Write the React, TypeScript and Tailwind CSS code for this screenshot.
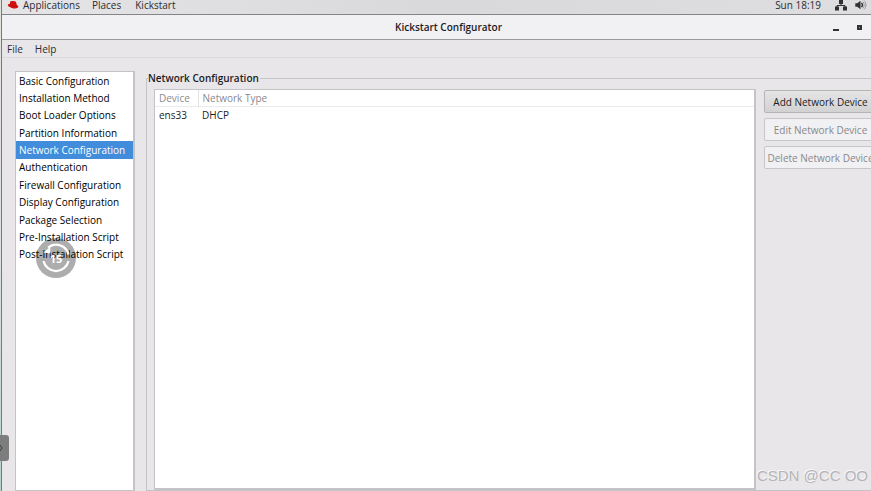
import { useState } from "react";

const sections = [
  "Basic Configuration",
  "Installation Method",
  "Boot Loader Options",
  "Partition Information",
  "Network Configuration",
  "Authentication",
  "Firewall Configuration",
  "Display Configuration",
  "Package Selection",
  "Pre-Installation Script",
  "Post-Installation Script",
];

function RedHat() {
  return (
    <svg className="h-3 w-3" viewBox="0 0 12 12" aria-hidden="true">
      <path d="M3.300 2.600C4 1.500 5.400 2 6.200 2.200 7.600 1.800 9 2.500 9.300 4l.5 2c1.200.4 1.800 1.300 1.500 2.100C10.700 9.700 7.500 9.800 4.800 8.900 2.500 8.200.5 6.900.8 5.700c.2-.7 1-.9 1.900-.8z" fill="#d40f0f" />
      <path d="M2.700 5.500c1 1.500 4.800 2.600 7 1.500" stroke="#a81010" strokeWidth=".6" fill="none" />
    </svg>
  );
}

function NetworkIcon() {
  return (
    <svg className="h-3 w-3" viewBox="0 0 12 12" fill="#2e3033" aria-hidden="true">
      <path d="M4 1h4v4H4zM0 7.500h4v4H0zM8 7.500h4v4H8z" />
      <path d="M6 4v2.500M2 8.500v-2h8v2" stroke="#2e3033" strokeWidth="1" fill="none" />
    </svg>
  );
}

function VolumeIcon() {
  return (
    <svg className="h-3 w-3" viewBox="0 0 12 12" aria-hidden="true">
      <path d="M.3 4.200h2L5.500 1.700v8.600L2.300 7.800h-2z" fill="#2e3033" />
      <path d="M6.500 3.800c1 1.200 1 3.200 0 4.400" stroke="#2e3033" strokeWidth="1.300" fill="none" />
      <path d="M7.800 2.600c1.800 2 1.800 4.800 0 6.800M9.200 1.600c2.300 2.600 2.300 6.200 0 8.800" stroke="#98989a" strokeWidth="1" fill="none" />
    </svg>
  );
}

function RewindBadge() {
  return (
    <svg className="pointer-events-none absolute left-[20px] top-[166px] h-10 w-10" viewBox="0 0 40 40" aria-hidden="true">
      <circle cx="20" cy="20" r="20" fill="#000" fillOpacity=".32" />
      <path d="M7.500 23a12.800 12.800 0 0 0 25 0M12 9.500a12.800 12.800 0 0 1 20.500 7" stroke="#fff" strokeWidth="2.200" fill="none" />
      <path d="M7.500 14.500l7-6-.5 7z" fill="#fff" />
      <text x="20" y="25" textAnchor="middle" fontSize="11" fontWeight="700" fill="#fff" className="font-['Open_Sans',sans-serif]">15</text>
    </svg>
  );
}

const action =
  "flex h-[23px] items-center justify-center whitespace-nowrap rounded-[2px] border px-1";

export default function App() {
  const [current, setCurrent] = useState("Network Configuration");
  return (
    <div className="relative flex h-screen overflow-hidden bg-[#e8e6e9] font-['Open_Sans',sans-serif] text-[10px] leading-[14px] text-[#1c1c1e]">
      <div className="w-[2px] shrink-0 border-r border-[#77797a] bg-linear-to-b from-[#e2e5dc] via-[#dde0e4] to-[#b5d4c6]" />
      <div className="flex min-w-0 flex-1 flex-col">
        <header className="flex h-[15px] shrink-0 items-start justify-between border-b border-[#858587] bg-linear-to-r from-[#e5e4e6] via-[#d9d8da] to-[#dedde0] pl-[5px] text-[#2c2c30]">
          <nav className="flex h-[10px] items-center">
            <button className="flex items-center gap-1"><RedHat />Applications</button>
            <button className="ml-3">Places</button>
            <button className="ml-[14px]">Kickstart</button>
          </nav>
          <div className="flex h-[10px] items-center pr-1">
            <span className="mr-[14px]">Sun 18:19</span>
            <NetworkIcon />
            <span className="ml-2"><VolumeIcon /></span>
          </div>
        </header>

        <div className="flex h-[25px] shrink-0 items-center border-b border-[#9b9b9d] bg-[#f1f0f3]">
          <div className="w-10" />
          <h1 className="flex-1 pl-[22px] text-center font-semibold">Kickstart Configurator</h1>
          <button aria-label="Minimize" className="mr-[18px] flex h-2 items-end">
            <span className="h-[2px] w-[6px] bg-[#333335]" />
          </button>
          <button aria-label="Restore" className="mr-[9px] h-[5px] w-[5px] border-2 border-[#333335] bg-[#999]" />
        </div>

        <nav className="flex h-[18px] shrink-0 items-center gap-3 border-b border-[#dcdadd] pl-[5px] text-[#2c2c30]">
          <button>File</button>
          <button>Help</button>
        </nav>

        <main className="flex min-h-0 flex-1 pl-[13px] pt-[13px]">
          <nav aria-label="Sections" className="relative w-[120px] shrink-0 border border-r-2 border-[#c4c3c6] bg-white text-black">
            <div className="grid h-[191px] grid-rows-11">
              {sections.map((name) => (
                <button
                  key={name}
                  onClick={() => setCurrent(name)}
                  className={`flex items-center whitespace-nowrap pl-[3px] text-left ${name === current ? "bg-[#418cdb] text-white" : ""}`}
                >
                  {name}
                </button>
              ))}
            </div>
            <RewindBadge />
          </nav>

          <fieldset className="ml-[11px] flex min-w-0 flex-1 border border-r-0 border-[#c4c3c6] pl-[7px]">
            <legend className="-ml-[6px] pr-px font-semibold">Network Configuration</legend>
            <div className="mt-1 flex h-[calc(100vh-90px)] min-w-0 flex-1">
              <div className="min-w-0 flex-1 border border-r-2 border-b-2 border-[#c4c3c6] bg-white">
                <table className="w-full table-fixed border-collapse text-left">
                  <thead className="text-[#8a8a8e]">
                    <tr className="h-4 border-b border-[#ebebeb]">
                      <th className="w-[43px] border-r border-[#e2e2e2] pl-1 font-normal">Device</th>
                      <th className="pl-1 font-normal">Network Type</th>
                    </tr>
                  </thead>
                  <tbody>
                    <tr className="h-[18px]">
                      <td className="pl-1">ens33</td>
                      <td className="pl-1">DHCP</td>
                    </tr>
                  </tbody>
                </table>
              </div>
              <div className="-mr-[6px] ml-2 mt-px flex w-[113px] shrink-0 flex-col gap-[5px]">
                <button className={`${action} border-[#b4b4b6] bg-linear-to-b from-[#e5e5e5] to-[#d2d2d3]`}>Add Network Device</button>
                <button disabled className={`${action} border-[#c6c5c8] bg-[#f1f0f2] text-[#88888b]`}>Edit Network Device</button>
                <button disabled className={`${action} border-[#c6c5c8] bg-[#f1f0f2] text-[#88888b]`}>Delete Network Device</button>
              </div>
            </div>
          </fieldset>
        </main>
      </div>

      <button aria-label="Open side panel" className="absolute left-0 top-[435px] h-[26px] w-[9px] rounded-r-[3px] bg-[#7d7d7d]">
        <svg className="h-full w-full" viewBox="0 0 9 26" aria-hidden="true">
          <path d="M0 10l2 3-2 3" fill="none" stroke="#36413b" />
        </svg>
      </button>
      <span className="absolute bottom-1 right-[3px] whitespace-nowrap font-['Liberation_Sans',sans-serif] text-[15px] leading-[22px] text-[#b5b4b7] [text-shadow:-1px_-1px_0_#f8f8f8]">
        CSDN @CC OO
      </span>
    </div>
  );
}
